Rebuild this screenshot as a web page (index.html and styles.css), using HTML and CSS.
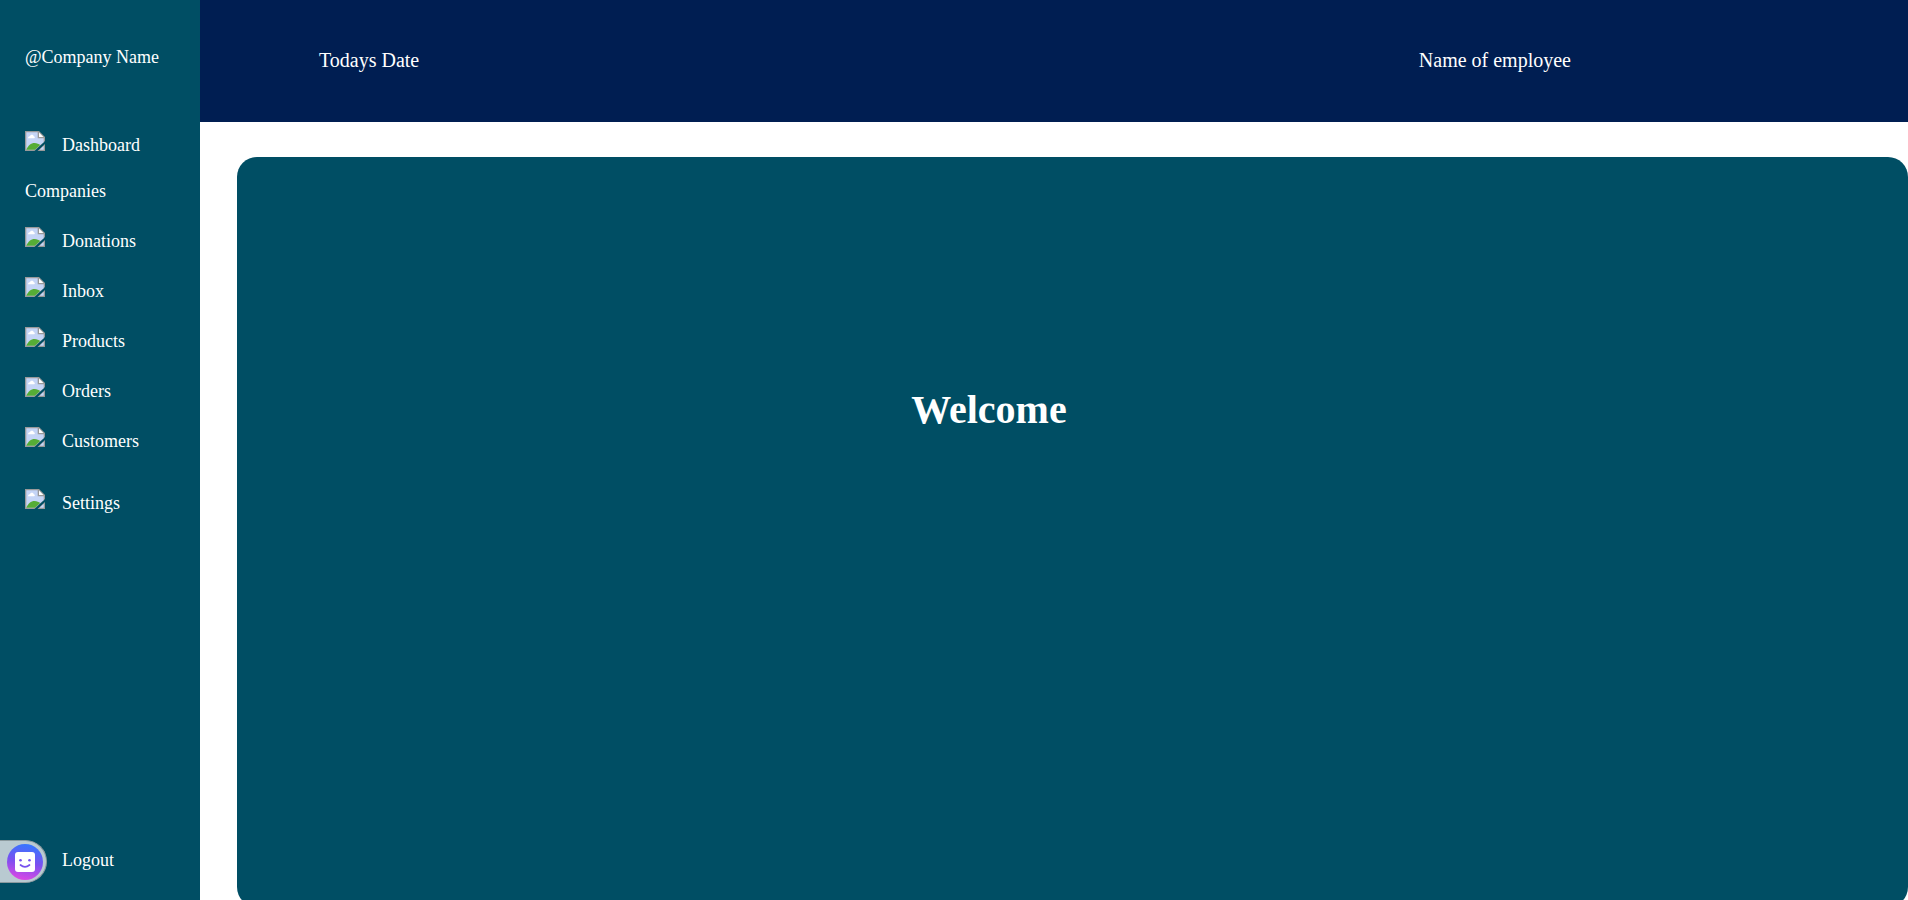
FILE: index.html
```html
<!DOCTYPE html>
<html lang="en">
<head>
<meta charset="utf-8">
<title>Dashboard</title>
<link rel="stylesheet" href="styles.css">
</head>
<body>
<svg width="0" height="0" class="defs" aria-hidden="true">
  <symbol id="picture" viewBox="0 0 20 20">
    <path d="M0 0H14L20 6V10L9.500 20H0Z" fill="#9a9a9a"/>
    <path d="M1.300 1.300H13V7H18.700V11.200L9.500 18.700H1.300Z" fill="#c5d5f6"/>
    <path d="M3 7.200C3 5.500 4.500 5.300 5 5.300C5.500 3.300 8.300 3.500 8.700 5.200C10 5.200 10.300 7.200 9 7.200Z" fill="#fff"/>
    <path d="M1.300 18.700C3 14.500 6 12 9.500 12C12 12 13.800 13 15.200 14.100L9.800 18.700Z" fill="#55ad36"/>
    <path d="M14 1.600L18.400 6H14Z" fill="#fff"/>
    <path d="M13.300 0.600V6.600H19.400" fill="none" stroke="#9a9a9a" stroke-width="1.200"/>
    <path d="M20 13V20H12.500Z" fill="#9a9a9a"/>
    <path d="M18.700 14.800V18.700H14.500Z" fill="#c5d5f6"/>
  </symbol>
</svg>
<div class="page">
  <aside class="sidebar">
    <div class="brand">@Company Name</div>
    <nav class="menu">
      <a class="item" href="#"><svg class="icon"><use href="#picture"/></svg>Dashboard</a>
      <a class="item" href="#">Companies</a>
      <a class="item" href="#"><svg class="icon"><use href="#picture"/></svg>Donations</a>
      <a class="item" href="#"><svg class="icon"><use href="#picture"/></svg>Inbox</a>
      <a class="item" href="#"><svg class="icon"><use href="#picture"/></svg>Products</a>
      <a class="item" href="#"><svg class="icon"><use href="#picture"/></svg>Orders</a>
      <a class="item" href="#"><svg class="icon"><use href="#picture"/></svg>Customers</a>
      <a class="item settings" href="#"><svg class="icon"><use href="#picture"/></svg>Settings</a>
    </nav>
    <a class="item logout" href="#"><svg class="icon"><use href="#picture"/></svg>Logout</a>
  </aside>
  <div class="content">
    <header class="topbar">
      <span>Todays Date</span>
      <span>Name of employee</span>
    </header>
    <main class="panel">
      <h1 class="welcome">Welcome</h1>
    </main>
  </div>
</div>
<button class="assistant" aria-label="Assistant">
  <svg class="face" viewBox="0 0 36 36">
    <defs>
      <linearGradient id="glow" x1="0.600" y1="0" x2="0.400" y2="1">
        <stop offset="0" stop-color="#3478ff"/>
        <stop offset="0.500" stop-color="#7950f0"/>
        <stop offset="1" stop-color="#dc48e4"/>
      </linearGradient>
    </defs>
    <circle cx="18" cy="18" r="18" fill="url(#glow)"/>
    <rect x="8" y="8" width="20" height="20" rx="3" fill="#fff"/>
    <circle cx="13.500" cy="16.300" r="1.300" fill="#7550ee"/>
    <circle cx="22.500" cy="16.300" r="1.300" fill="#7550ee"/>
    <path d="M13.500 21Q18 24.600 22.500 21" fill="none" stroke="#7550ee" stroke-width="1.700" stroke-linecap="round"/>
  </svg>
</button>
</body>
</html>
```

FILE: styles.css
```css
* {
  box-sizing: border-box;
}

body {
  margin: 0;
  overflow: hidden;
  background: #fff;
  color: #fff;
  font-family: "Liberation Serif", "Times New Roman", serif;
}

.defs {
  position: absolute;
}

.page {
  display: flex;
  height: 100vh;
}

.sidebar {
  display: flex;
  flex-direction: column;
  flex: 0 0 200px;
  padding: 47px 25px 30px;
  background: #004e64;
  font-size: 18px;
  line-height: 20px;
}

.brand {
  margin-bottom: 64px;
  white-space: nowrap;
}

.menu {
  display: flex;
  flex-direction: column;
  gap: 26px;
}

.item {
  display: flex;
  align-items: baseline;
  gap: 17px;
  color: inherit;
  text-decoration: none;
}

.icon {
  width: 20px;
  height: 20px;
}

.settings {
  margin-top: 12px;
}

.logout {
  margin-top: auto;
}

.content {
  flex: 1;
  min-width: 0;
}

.topbar {
  display: flex;
  justify-content: space-between;
  padding: 49px 337px 51px 119px;
  background: #001e52;
  font-size: 20px;
  line-height: 22px;
}

.panel {
  min-height: 750px;
  margin: 35px 0 0 37px;
  padding-top: 231px;
  border-radius: 20px;
  background: #004e64;
}

.welcome {
  margin: 0;
  padding-right: 10%;
  font-size: 40px;
  line-height: 44px;
  text-align: center;
}

.assistant {
  position: fixed;
  bottom: 17px;
  left: 0;
  display: flex;
  align-items: center;
  justify-content: flex-end;
  width: 47px;
  height: 43px;
  padding: 0 3px 0 0;
  border: 1px solid #8b9a9f;
  border-left: 0;
  border-radius: 0 22px 22px 0;
  background: #b9cad1;
}

.face {
  width: 36px;
  height: 36px;
}
```
